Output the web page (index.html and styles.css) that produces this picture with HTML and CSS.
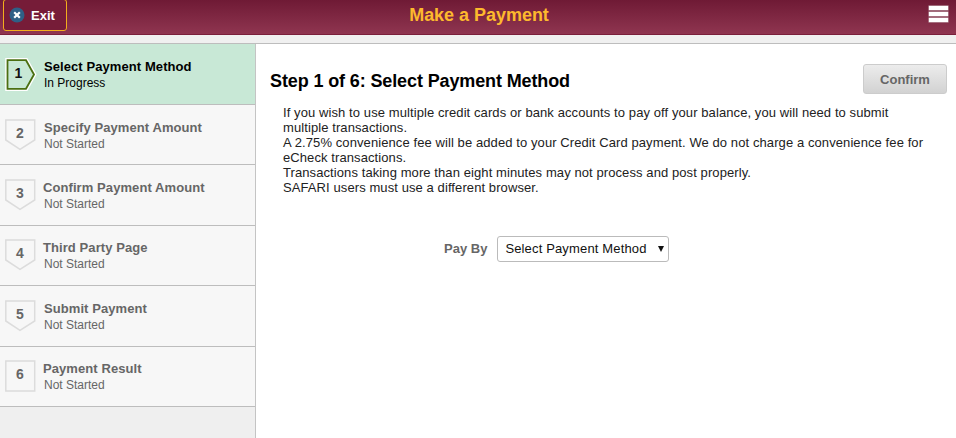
FILE: index.html
```html
<!DOCTYPE html>
<html lang="en">
<head>
    <meta charset="UTF-8">
    <title>Make a Payment</title>
    <link rel="stylesheet" href="styles.css">
</head>
<body>
    <header class="banner">
        <button class="exit-btn">
            <svg class="exit-icon" width="16" height="16" viewBox="0 0 16 16">
                <circle cx="8" cy="8" r="7.5" fill="#2f5f86"/>
                <path d="M5.2 5.2l5.6 5.6M10.8 5.2l-5.6 5.6" stroke="#fff" stroke-width="2.2"/>
            </svg>
            Exit
        </button>
        <h1 class="banner-title">Make a Payment</h1>
        <div class="menu-icon"><span></span><span></span><span></span></div>
    </header>
    <div class="band"></div>
    <div class="page">
        <nav class="steps">
            <div class="step active">
                <svg class="badge" width="32" height="34" viewBox="0 0 32 34">
                    <path d="M2.5 3.2H21L29 17.5 21 31.8H2.5Z" fill="#fff" stroke="#fff" stroke-width="4.5"/>
                    <path d="M2.5 3.2H21L29 17.5 21 31.8H2.5Z" fill="#c8e8d6" stroke="#4b6f12" stroke-width="1.8"/>
                    <text x="13.5" y="21" text-anchor="middle" class="badge-num">1</text>
                </svg>
                <div class="step-text">
                    <div class="step-title">Select Payment Method</div>
                    <div class="step-status">In Progress</div>
                </div>
            </div>
            <div class="step">
                <svg class="badge" width="32" height="34" viewBox="0 0 32 34">
                    <path d="M0.8 2H29.7V22L15 31.3 0.8 22Z" fill="none" stroke="#dcdcdc" stroke-width="1.5"/>
                    <text x="15" y="19.5" text-anchor="middle" class="badge-num">2</text>
                </svg>
                <div class="step-text">
                    <div class="step-title">Specify Payment Amount</div>
                    <div class="step-status">Not Started</div>
                </div>
            </div>
            <div class="step">
                <svg class="badge" width="32" height="34" viewBox="0 0 32 34">
                    <path d="M0.8 2H29.7V22L15 31.3 0.8 22Z" fill="none" stroke="#dcdcdc" stroke-width="1.5"/>
                    <text x="15" y="19.5" text-anchor="middle" class="badge-num">3</text>
                </svg>
                <div class="step-text">
                    <div class="step-title tight">Confirm Payment Amount</div>
                    <div class="step-status">Not Started</div>
                </div>
            </div>
            <div class="step">
                <svg class="badge" width="32" height="34" viewBox="0 0 32 34">
                    <path d="M0.8 2H29.7V22L15 31.3 0.8 22Z" fill="none" stroke="#dcdcdc" stroke-width="1.5"/>
                    <text x="15" y="19.5" text-anchor="middle" class="badge-num">4</text>
                </svg>
                <div class="step-text">
                    <div class="step-title tight">Third Party Page</div>
                    <div class="step-status">Not Started</div>
                </div>
            </div>
            <div class="step">
                <svg class="badge" width="32" height="34" viewBox="0 0 32 34">
                    <path d="M0.8 2H29.7V22L15 31.3 0.8 22Z" fill="none" stroke="#dcdcdc" stroke-width="1.5"/>
                    <text x="15" y="19.5" text-anchor="middle" class="badge-num">5</text>
                </svg>
                <div class="step-text">
                    <div class="step-title">Submit Payment</div>
                    <div class="step-status">Not Started</div>
                </div>
            </div>
            <div class="step">
                <svg class="badge" width="32" height="34" viewBox="0 0 32 34">
                    <path d="M0.8 2H29.7V32H0.8Z" fill="none" stroke="#dcdcdc" stroke-width="1.5"/>
                    <text x="15" y="20" text-anchor="middle" class="badge-num">6</text>
                </svg>
                <div class="step-text">
                    <div class="step-title tight">Payment Result</div>
                    <div class="step-status">Not Started</div>
                </div>
            </div>
        </nav>
        <main class="content">
            <div class="content-head">
                <h2 class="step-heading">Step 1 of 6: Select Payment Method</h2>
                <button class="confirm-btn">Confirm</button>
            </div>
            <p class="info">
                If you wish to use multiple credit cards or bank accounts to pay off your balance, you will need to submit multiple transactions.<br>
                A 2.75% convenience fee will be added to your Credit Card payment. We do not charge a convenience fee for eCheck transactions.<br>
                Transactions taking more than eight minutes may not process and post properly.<br>
                SAFARI users must use a different browser.
            </p>
            <div class="pay-by">
                <label class="pay-label" for="method">Pay By</label>
                <div class="select-wrap">
                    <select id="method" class="pay-select">
                        <option>Select Payment Method</option>
                    </select>
                </div>
            </div>
        </main>
    </div>
</body>
</html>
```

FILE: styles.css
```css
* {
    box-sizing: border-box;
}
body {
    margin: 0;
    height: 438px;
    overflow: hidden;
    display: flex;
    flex-direction: column;
    font-family: "Liberation Sans", Arial, sans-serif;
    background: #fff;
    color: #000;
}
.banner {
    position: relative;
    flex: none;
    height: 35px;
    display: flex;
    align-items: center;
    justify-content: center;
    background: linear-gradient(#6f1a35, #8f3550);
    border-bottom: 1px solid #7a1f3b;
}
.banner-title {
    margin: 0 0 3px 2px;
    font-size: 18px;
    font-weight: bold;
    letter-spacing: -0.03px;
    color: #fdb92d;
}
.exit-btn {
    position: absolute;
    left: 3px;
    top: -1px;
    width: 64px;
    height: 32px;
    display: flex;
    align-items: center;
    gap: 6px;
    padding: 0 0 0 5px;
    background: #761c38;
    border: 1px solid #f2ae1c;
    border-radius: 3px;
    color: #fff;
    font: bold 13px "Liberation Sans", Arial, sans-serif;
}
.menu-icon {
    position: absolute;
    right: 8px;
    top: 6px;
    width: 19px;
    display: flex;
    flex-direction: column;
    gap: 2px;
}
.menu-icon span {
    height: 4px;
    background: #fff;
    box-shadow: 0 0 0 0.5px #c9b3ba;
}
.band {
    flex: none;
    height: 9px;
    background: #f0f0f0;
    border-bottom: 1px solid #bdbdbd;
}
.page {
    flex: 1;
    display: flex;
    min-height: 0;
}
.steps {
    flex: none;
    width: 256px;
    background: #efefef;
    border-right: 1px solid #c4c4c4;
}
.step {
    height: 60.4px;
    display: flex;
    align-items: center;
    gap: 7px;
    padding-left: 5px;
    background: #f7f7f7;
    border-bottom: 1px solid #bdbdbd;
}
.step:first-child {
    height: 61px;
}
.step.active {
    background: #c8e8d6;
}
.badge {
    flex: none;
}
.badge-num {
    font: bold 14px "Liberation Sans", Arial, sans-serif;
    fill: #666;
}
.active .badge-num {
    fill: #111;
}
.step-title {
    margin-top: 1px;
    font-size: 13px;
    font-weight: bold;
    line-height: 17px;
    letter-spacing: 0.08px;
    color: #666;
}
.step-title.tight {
    margin-left: -1px;
}
.step-status {
    font-size: 12px;
    line-height: 16px;
    color: #666;
}
.active .step-title,
.active .step-status {
    color: #000;
}
.content {
    flex: 1;
    padding: 20px 9px 0 14px;
}
.content-head {
    display: flex;
    justify-content: space-between;
    align-items: flex-start;
}
.step-heading {
    margin: 7px 0 0;
    font-size: 18px;
    font-weight: bold;
    letter-spacing: -0.12px;
}
.confirm-btn {
    width: 84px;
    height: 30px;
    background: linear-gradient(#ececec, #d2d2d2);
    border: 1px solid #ccc;
    border-radius: 3px;
    color: #666;
    font: bold 13px "Liberation Sans", Arial, sans-serif;
}
.info {
    margin: 11px 20px 0 13px;
    font-size: 13px;
    line-height: 15px;
    letter-spacing: 0.09px;
    color: #222;
}
.pay-by {
    display: flex;
    align-items: center;
    gap: 10px;
    margin: 41px 0 0 174px;
}
.pay-label {
    margin-bottom: 1px;
    font-size: 13px;
    font-weight: bold;
    color: #666;
}
.select-wrap {
    position: relative;
    width: 172px;
}
.select-wrap::after {
    content: "";
    position: absolute;
    right: 5px;
    top: 10px;
    border-top: 6px solid #111;
    border-left: 3.5px solid transparent;
    border-right: 3.5px solid transparent;
    pointer-events: none;
}
.pay-select {
    display: block;
    width: 100%;
    height: 26px;
    padding: 0 7px 2px;
    appearance: none;
    background: #fff;
    border: 1px solid #bbb;
    border-radius: 3px;
    color: #111;
    font: 13px "Liberation Sans", Arial, sans-serif;
    letter-spacing: 0.15px;
}
```
